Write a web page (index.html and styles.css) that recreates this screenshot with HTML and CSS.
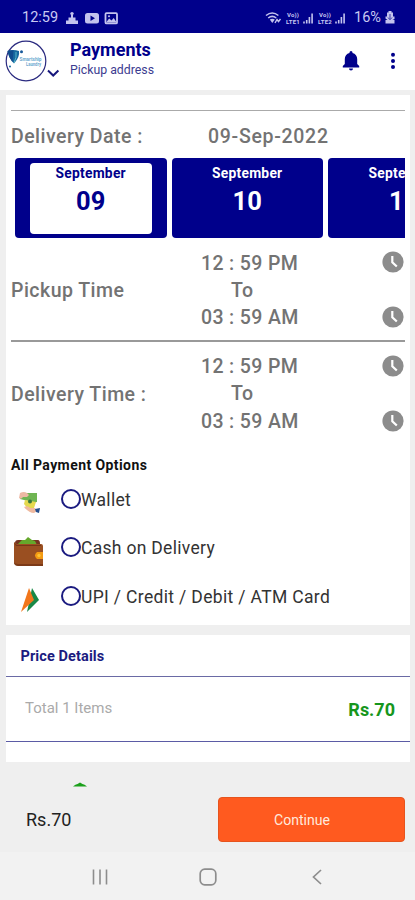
FILE: index.html
```html
<!DOCTYPE html>
<html lang="en">
<head>
<meta charset="utf-8">
<title>Payments</title>
<link rel="stylesheet" href="styles.css">
</head>
<body>
<svg width="0" height="0" class="defs">
  <symbol id="clock" viewBox="0 0 22 22"><circle cx="11" cy="11" r="10.6" fill="#8c8c8c"/><path d="M10.300 5v6.300l4.500 4.200" fill="none" stroke="#fff" stroke-width="2.200"/></symbol>
  <symbol id="signal" viewBox="0 0 11 12"><path d="M1 11.500v-2M3.700 11.500v-3.500M6.400 11.500v-6.500M9.100 11.500v-10" stroke="#c3c3ee" stroke-width="1.600"/></symbol>
</svg>
<div class="screen">
  <div class="status">
    <span class="clock">12:59</span>
    <svg class="notes" width="54" height="14" viewBox="0 0 54 14">
      <g fill="#c3c3ee">
        <circle cx="7" cy="2.600" r="1.700"/><path d="M6 4h2v2.500h2.500v3H13V13H1V9.500h2.500v-3H6z"/>
        <rect x="20" y="2" width="14" height="10.500" rx="2.500"/><path d="M25.500 4.500l4.500 2.700-4.500 2.700z" fill="#00008b"/>
      </g>
      <rect x="40.500" y="2.200" width="11.500" height="10.200" rx="1" fill="none" stroke="#c3c3ee" stroke-width="1.800"/>
      <path d="M41 11.500l3.200-4 2.300 2 2.200-2.500 3 4.500z" fill="#c3c3ee"/><circle cx="44" cy="5.200" r="1" fill="#c3c3ee"/>
    </svg>
    <svg class="wifi" width="17" height="14" viewBox="0 0 17 14">
      <path d="M1 4.500q6.200-5 12.400 0M3.200 7q4-3.200 8 0" fill="none" stroke="#c3c3ee" stroke-width="1.600"/>
      <path d="M4.800 8.600q2.500-1.600 5 0l-2.500 3.400z" fill="#c3c3ee"/>
      <path d="M10 12l2-3.500 1.500 2 2-2.500" fill="none" stroke="#c3c3ee" stroke-width="1.400"/>
    </svg>
    <span class="lte"><span>Vo))</span><span>LTE1</span></span>
    <svg class="sig" width="11" height="12"><use href="#signal"/></svg>
    <span class="lte"><span>Vo))</span><span>LTE2</span></span>
    <svg class="sig" width="11" height="12"><use href="#signal"/></svg>
    <span class="percent">16%</span>
    <svg class="batt" width="10" height="13" viewBox="0 0 10 13"><path d="M3.500 0h3v1.500H8v4h1.500v2.500L7.500 9H9.500v3.500h-9V9h2L.5 7.500V5.500H2v-4h1.500z" fill="#c3c3ee"/><path d="M5 3v5M3 6.500l2 2.300 2-2.300" fill="none" stroke="#3a3aa8"/></svg>
  </div>

  <div class="header">
    <svg class="logo" width="56" height="44" viewBox="0 0 56 44">
      <circle cx="22" cy="22" r="19.800" fill="#fff" stroke="#2b2b80" stroke-width="1.200"/>
      <path d="M3.500 12q5.500-2 11.500 0 1 6-5 12.500-5-5-6.500-12.500z" fill="#17689f"/>
      <path d="M3.500 12q3-1 6-.7l-1 12q-4-5-5-11.300z" fill="#114b8d"/>
      <path d="M12 13q1 5-2 11" fill="none" stroke="#58b6c8"/>
      <circle cx="17.500" cy="12.800" r="1.500" fill="#17589a"/><circle cx="6" cy="27.500" r="1" fill="#17689f"/>
      <text x="15.500" y="22" class="logo-text" textLength="22" lengthAdjust="spacingAndGlyphs">Smartship</text>
      <text x="22" y="26.500" class="logo-text" textLength="15" lengthAdjust="spacingAndGlyphs">Laundry</text>
      <path d="M44 31.500l5.200 5 5.200-5" fill="none" stroke="#17177c" stroke-width="2"/>
    </svg>
    <div class="titles">
      <div class="title">Payments</div>
      <div class="subtitle">Pickup address</div>
    </div>
    <svg class="bell" width="18" height="20" viewBox="0 0 18 20"><path d="M7.500 2V1.500a1.500 1.500 0 0 1 3 0V2c3 .7 4.700 3.200 4.700 6v5l2 2v1.500H.8V15l2-2V8c0-2.800 1.700-5.300 4.700-6zM7 17.500h4a2 2 0 0 1-4 0z" fill="#00008b"/></svg>
    <svg class="more" width="6" height="18" viewBox="0 0 6 18"><g fill="#00008b"><circle cx="3" cy="2.700" r="2"/><circle cx="3" cy="8.900" r="2"/><circle cx="3" cy="15.100" r="2"/></g></svg>
  </div>

  <div class="content">
    <div class="card main">
      <div class="date-line"><span class="label">Delivery Date :</span><span class="big">09-Sep-2022</span></div>
      <div class="dates">
        <div class="date"><div class="picked"><span class="month">September</span><span class="day">09</span></div></div>
        <div class="date"><span class="month">September</span><span class="day">10</span></div>
        <div class="date"><span class="month">September</span><span class="day">11</span></div>
      </div>
      <div class="slot first">
        <span class="label">Pickup Time</span>
        <div class="times"><span>12 : 59 PM</span><span class="to">To</span><span>03 : 59 AM</span></div>
        <div class="clocks"><svg width="22" height="22"><use href="#clock"/></svg><svg width="22" height="22"><use href="#clock"/></svg></div>
      </div>
      <div class="slot">
        <span class="label">Delivery Time :</span>
        <div class="times"><span>12 : 59 PM</span><span class="to">To</span><span>03 : 59 AM</span></div>
        <div class="clocks"><svg width="22" height="22"><use href="#clock"/></svg><svg width="22" height="22"><use href="#clock"/></svg></div>
      </div>
      <div class="options-title">All Payment Options</div>
      <div class="option">
        <svg width="34" height="34" viewBox="0 0 34 34">
          <path d="M11 7h17v9q-5 1-9-1l-8-2z" fill="#6fb553"/>
          <path d="M11 7q4-2 7 0l2 2-2 2h-4q-2 3-4 1z" fill="#edb9a4"/>
          <path d="M16 14l6 1 5 1-2 6-6 1-4-5z" fill="#e5d94e"/>
          <circle cx="21" cy="15.500" r="2" fill="#38753b"/>
          <path d="M15 21q4-2 6 1l5 0 2 3-3 2q-5 0-10-6z" fill="#efb99f"/>
          <path d="M26 23l5-1-1 5-3-1z" fill="#254f8e"/>
        </svg>
        <span class="radio"></span><span class="opt">Wallet</span>
      </div>
      <div class="option">
        <svg width="34" height="34" viewBox="0 0 34 34">
          <path d="M6 9q0-3 3-3h20q2 0 2 4H6z" fill="#743421"/><path d="M9 10l4-4 3 0 3-3 4 3 3 1 2 4H9z" fill="#65a82b"/>
          <path d="M5 8l3 2h24q2 0 2 2v19H8q-3 0-3-3z" fill="#9a4f21"/><path d="M5 9l3 2h24v1H7z" fill="#773619"/><path d="M5 28q1 2 4 2h25v2H9q-4 0-4-4z" fill="#7c3a17"/>
          <path d="M28 18h6q1 0 1 2v3q0 2-1 2h-6q-4-3.500 0-7z" fill="#f49a12"/><circle cx="30" cy="21.500" r="1.700" fill="#ffc431"/>
        </svg>
        <span class="radio"></span><span class="opt">Cash on Delivery</span>
      </div>
      <div class="option">
        <svg width="34" height="34" viewBox="0 0 34 34"><path d="M23 5l7 12-12 12z" fill="#188847"/><path d="M20 5l5 12-13 12z" fill="#f2761b"/></svg>
        <span class="radio"></span><span class="opt upi">UPI / Credit / Debit / ATM Card</span>
      </div>
    </div>

    <div class="card price">
      <div class="price-title">Price Details</div>
      <div class="price-row"><span class="total">Total 1 Items</span><span class="amount">Rs.70</span></div>
    </div>
    <svg class="peek" width="14" height="5" viewBox="0 0 14 5"><path d="M0 4.500q2.500-2.500 4.500-2.500L7 .5 9.500 2q2 0 4.500 2.500z" fill="#1ba01b"/></svg>
  </div>

  <div class="checkout"><span class="sum">Rs.70</span><div class="continue">Continue</div></div>
  <div class="nav">
    <svg width="16" height="16" viewBox="0 0 16 16"><path d="M1.500 .5v15M8 .5v15M14.500 .5v15" stroke="#8d8d8d" stroke-width="1.600"/></svg>
    <svg width="18" height="18" viewBox="0 0 18 18"><rect x="1.200" y="1.200" width="15.600" height="15.600" rx="4.500" fill="none" stroke="#8d8d8d" stroke-width="1.700"/></svg>
    <svg width="10" height="16" viewBox="0 0 10 16"><path d="M9 1L1.500 8 9 15" fill="none" stroke="#8d8d8d" stroke-width="1.700"/></svg>
  </div>
</div>
</body>
</html>
```
FILE: styles.css
```css
* { box-sizing: border-box; }
body { margin: 0; font-family: Roboto, "Liberation Sans", sans-serif; background: #efefef; }
svg { display: block; flex: none; }
.defs { position: absolute; }
.screen { width: 415px; height: 900px; display: flex; flex-direction: column; overflow: hidden; background: #efefef; white-space: nowrap; }

.status { height: 33px; flex: none; display: flex; align-items: center; padding: 2px 20px 0 22px; background: #00008b; color: #c9c9f2; }
.clock { width: 43px; font-size: 14.5px; }
.wifi { margin-left: auto; }
.lte { margin-left: 3px; width: 16px; display: flex; flex-direction: column; align-items: center; font-size: 6px; line-height: 7px; font-weight: 700; letter-spacing: 0.2px; }
.sig { margin-left: 2px; }
.percent { margin-left: 8px; width: 28px; font-size: 14.5px; }
.batt { margin-left: 3px; }

.header { height: 57px; flex: none; display: flex; align-items: flex-start; background: #fff; padding-left: 4px; color: #00008b; }
.logo { margin-top: 6px; }
.logo-text { font-size: 4.5px; font-weight: 700; fill: #6da9cf; }
.titles { margin: 6px 0 0 10px; width: 272px; }
.title { font-size: 18px; line-height: 22px; font-weight: 700; }
.subtitle { font-size: 12.3px; line-height: 16px; margin-top: 1px; color: #3c3c90; }
.bell { margin-top: 18px; }
.more { margin: 19px 0 0 30px; }

.content { height: 697px; flex: none; padding: 5px 5px 0 6px; overflow: hidden; }
.card { background: #fff; }
.main { height: 530px; padding: 15px 5px 0; }
.date-line { height: 48px; border-top: 1px solid #aaa; display: flex; align-items: center; padding-top: 3px; }
.label { width: 197px; font-size: 19.5px; font-weight: 500; color: #737373; letter-spacing: 0.47px; }
.big { font-size: 19.5px; font-weight: 500; color: #737373; letter-spacing: 0.7px; }
.dates { height: 80px; display: flex; gap: 5px; padding-left: 4px; overflow: hidden; }
.date { width: 151.5px; height: 80px; flex: none; border-radius: 4px; background: #00008b; color: #fff; display: flex; flex-direction: column; align-items: center; padding-top: 5px; }
.picked { width: 122px; height: 71px; border-radius: 4px; background: #fff; color: #00008b; display: flex; flex-direction: column; align-items: center; }
.month { font-size: 13.8px; line-height: 21px; font-weight: 700; letter-spacing: 0.25px; }
.day { font-size: 25.5px; line-height: 30px; margin-top: 2px; font-weight: 700; letter-spacing: 0.2px; }
.slot { height: 104px; display: flex; align-items: center; }
.first { border-bottom: 2px solid #999; }
.slot .label { width: 190px; }
.first .label { padding-top: 2px; }
.first .times { padding-top: 3px; }
.times { width: 181px; display: flex; flex-direction: column; font-size: 19.5px; line-height: 27.3px; font-weight: 500; color: #737373; letter-spacing: 0.37px; }
.to { padding-left: 30px; }
.clocks { height: 77px; display: flex; flex-direction: column; justify-content: space-between; margin-top: -2px; }
.first .clocks { margin-top: 0; }
.options-title { height: 30px; line-height: 30px; margin-top: 4px; font-size: 14px; font-weight: 700; color: #111; letter-spacing: 0.42px; }
.option { height: 48.3px; display: flex; align-items: flex-start; }
.option svg { margin: 6px 0 0 -2px; }
.radio { width: 20px; height: 20px; margin: 9px 0 0 18px; border: 2px solid #1b1b80; border-radius: 50%; }
.opt { font-size: 17.5px; line-height: 22px; margin-top: 9px; color: #333; letter-spacing: 0.3px; }
.upi { letter-spacing: 0.34px; }

.price { margin-top: 10px; height: 127px; }
.price-title { height: 42px; line-height: 43px; padding-left: 14.5px; font-size: 14.5px; font-weight: 700; color: #1b1b80; letter-spacing: 0.1px; border-bottom: 1px solid #6a6aa5; }
.price-row { height: 65px; border-bottom: 1px solid #5b5ba5; display: flex; justify-content: space-between; align-items: center; padding: 0 15px 2px 19px; }
.total { font-size: 15px; color: #aaa; }
.amount { font-size: 18px; font-weight: 700; color: #16961c; padding-top: 3px; }
.peek { margin: 20px 0 0 67px; }

.checkout { height: 65px; flex: none; display: flex; align-items: center; padding: 0 10px 0 26px; }
.sum { width: 192px; font-size: 18px; color: #222; }
.continue { width: 187px; height: 45px; border-radius: 4px; background: #ff5a1f; border: 1px solid #e6541e; color: #ffe9dc; font-size: 14.1px; line-height: 44px; padding-left: 55px; }
.nav { height: 48px; flex: none; background: #f2f2f2; display: flex; align-items: center; padding: 2px 0 0 92px; }
.nav svg + svg { margin-left: 91px; }
.nav svg + svg + svg { margin-left: 95px; }
```
